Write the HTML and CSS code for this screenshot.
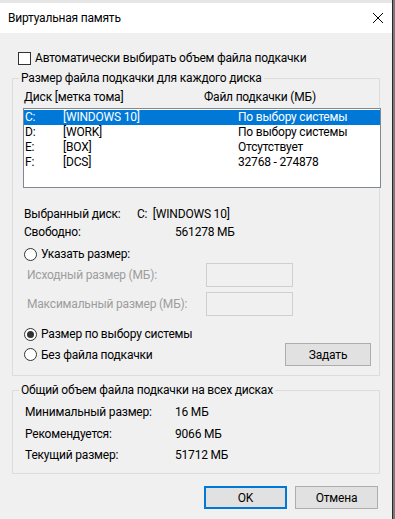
FILE: index.html
```html
<!DOCTYPE html>
<html lang="ru">
<head>
    <meta charset="UTF-8">
    <meta name="viewport" content="width=device-width, initial-scale=1.0">
    <title>Виртуальная память</title>
    <link rel="stylesheet" href="styles.css">
</head>
<body>
    <div class="window">
        <div class="behind"></div>

        <div class="titlebar">
            <span class="title">Виртуальная память</span>
            <svg class="close" viewBox="0 0 12 12" width="12" height="12">
                <line x1="1" y1="1" x2="11" y2="11" stroke="#000" stroke-width="1"/>
                <line x1="11" y1="1" x2="1" y2="11" stroke="#000" stroke-width="1"/>
            </svg>
        </div>

        <div class="content">
            <div class="check-row">
                <span class="checkbox"></span>
                <span>Автоматически выбирать объем файла подкачки</span>
            </div>

            <fieldset class="group group-disks">
                <legend>Размер файла подкачки для каждого диска</legend>

                <div class="list-head">
                    <span class="head-disk">Диск [метка тома]</span>
                    <span>Файл подкачки (МБ)</span>
                </div>

                <div class="disk-list">
                    <div class="disk-row selected">
                        <span class="col-letter">C:</span>
                        <span class="col-label">[WINDOWS 10]</span>
                        <span>По выбору системы</span>
                    </div>
                    <div class="disk-row">
                        <span class="col-letter">D:</span>
                        <span class="col-label">[WORK]</span>
                        <span>По выбору системы</span>
                    </div>
                    <div class="disk-row">
                        <span class="col-letter">E:</span>
                        <span class="col-label">[BOX]</span>
                        <span>Отсутствует</span>
                    </div>
                    <div class="disk-row">
                        <span class="col-letter">F:</span>
                        <span class="col-label">[DCS]</span>
                        <span>32768 - 274878</span>
                    </div>
                </div>

                <div class="info-row info-first">
                    <span class="info-key">Выбранный диск:</span>
                    <span>C:&nbsp;&nbsp;[WINDOWS 10]</span>
                </div>
                <div class="info-row info-free">
                    <span class="info-key info-key-wide">Свободно:</span>
                    <span>561278 МБ</span>
                </div>

                <div class="radio-row radio-custom">
                    <span class="radio"></span>
                    <span>Указать размер:</span>
                </div>

                <div class="size-row size-initial">
                    <span class="size-label">Исходный размер (МБ):</span>
                    <span class="textbox"></span>
                </div>
                <div class="size-row size-max">
                    <span class="size-label">Максимальный размер (МБ):</span>
                    <span class="textbox"></span>
                </div>

                <div class="radio-row radio-system">
                    <span class="radio checked"></span>
                    <span>Размер по выбору системы</span>
                </div>
                <div class="set-row">
                    <div class="radio-row">
                        <span class="radio"></span>
                        <span>Без файла подкачки</span>
                    </div>
                    <button class="btn btn-set">Задать</button>
                </div>
            </fieldset>

            <fieldset class="group group-total">
                <legend>Общий объем файла подкачки на всех дисках</legend>
                <div class="total-row total-min">
                    <span class="total-key">Минимальный размер:</span>
                    <span>16 МБ</span>
                </div>
                <div class="total-row total-rec">
                    <span class="total-key">Рекомендуется:</span>
                    <span>9066 МБ</span>
                </div>
                <div class="total-row total-cur">
                    <span class="total-key">Текущий размер:</span>
                    <span>51712 МБ</span>
                </div>
            </fieldset>

            <div class="dialog-buttons">
                <button class="btn btn-ok">OK</button>
                <button class="btn">Отмена</button>
            </div>
        </div>
    </div>
    <div class="edge"></div>
</body>
</html>
```

FILE: styles.css
```css
:root {
    --face: #f0f0f0;
    --group-line: #dcdcdc;
    --accent: #0078d7;
    --disabled: #9d9d9d;
}

body, html {
    margin: 0;
    padding: 0;
    height: 100%;
    overflow: hidden;
}

body {
    display: flex;
    font-family: "Segoe UI", Roboto, sans-serif;
    font-size: 12px;
    line-height: 16px;
    letter-spacing: -0.2px;
    color: #000;
    background: var(--face);
}

.window {
    width: 392px;
    display: flex;
    flex-direction: column;
    background: var(--face);
}

.edge {
    flex: 1;
    border-left: 1px solid #2a2a2a;
    background: #7a7a7a;
}

/* window lying behind the dialog, only its lower edge shows */
.behind {
    height: 3px;
    background: #e6e6e6;
    border-bottom: 0;
}

.titlebar {
    height: 30px;
    background: #fff;
    display: flex;
    align-items: center;
    justify-content: space-between;
    padding: 0 8px 0 8px;
}

.title {
    font-size: 12px;
}

.content {
    padding: 17px 12px 0 12px;
}

.check-row {
    display: flex;
    align-items: center;
    height: 16px;
    padding-left: 6px;
    gap: 4px;
}

.checkbox {
    width: 11px;
    height: 11px;
    border: 1px solid #333;
    background: #fff;
}

.group {
    margin: 0;
    padding: 0;
    min-width: 0;
    border: 1px solid var(--group-line);
}

.group legend {
    margin-left: 6px;
    padding: 0 2px;
    line-height: 16px;
}

.group-disks {
    margin-top: 4px;
    padding: 0 0 9px 0;
}

.list-head {
    display: flex;
    height: 16px;
    margin: 3px 0 0 11px;
}

.head-disk {
    width: 180px;
}

.disk-list {
    width: 356px;
    height: 76px;
    margin: 3px 0 0 10px;
    padding: 1px 0;
    border: 1px solid #828790;
    background: #fff;
}

.disk-row {
    display: flex;
    height: 15px;
    line-height: 15px;
    padding-left: 1px;
}

.disk-row.selected {
    background: var(--accent);
    color: #fff;
}

.col-letter {
    width: 38px;
}

.col-label {
    width: 175px;
}

.info-row {
    display: flex;
    height: 16px;
    margin-left: 11px;
}

.info-first {
    margin-top: 18px;
}

.info-free {
    margin-top: 2px;
}

.info-key {
    width: 113px;
}

.info-key-wide {
    width: 151px;
}

.radio-row {
    display: flex;
    align-items: center;
    height: 16px;
    margin-left: 11px;
    gap: 4px;
}

.radio {
    width: 11px;
    height: 11px;
    border: 1px solid #333;
    border-radius: 50%;
    background: #fff;
    display: flex;
    align-items: center;
    justify-content: center;
}

.radio.checked::after {
    content: "";
    width: 7px;
    height: 7px;
    border-radius: 50%;
    background: #333;
}

.radio-custom {
    margin-top: 6px;
}

.size-row {
    display: flex;
    align-items: center;
    height: 24px;
    margin-left: 14px;
    color: var(--disabled);
}

.size-initial {
    margin-top: 1px;
}

.size-max {
    margin-top: 5px;
}

.size-label {
    width: 179px;
}

.textbox {
    width: 85px;
    height: 22px;
    border: 1px solid #cfcfcf;
    background: var(--face);
}

.radio-system {
    margin-top: 10px;
}

.set-row {
    display: flex;
    align-items: center;
    justify-content: space-between;
    height: 23px;
    margin-top: 1px;
    padding-right: 8px;
}

.set-row .radio-row {
    margin-left: 11px;
}

.btn {
    font-family: inherit;
    font-size: 12px;
    line-height: 16px;
    letter-spacing: -0.2px;
    color: #000;
    height: 23px;
    width: 83px;
    padding: 0;
    background: #e1e1e1;
    border: 1px solid #adadad;
    border-radius: 0;
}

.btn-set {
    width: 86px;
}

.btn-ok {
    border: 2px solid var(--accent);
}

.group-total {
    margin-top: 6px;
    padding: 0 0 10px 0;
}

.total-row {
    display: flex;
    height: 16px;
    margin-left: 12px;
}

.total-min {
    margin-top: 6px;
}

.total-rec {
    margin-top: 6px;
}

.total-cur {
    margin-top: 5px;
}

.total-key {
    width: 150px;
}

.dialog-buttons {
    display: flex;
    justify-content: flex-end;
    gap: 8px;
    margin-top: 12px;
    padding-right: 2px;
}
```
